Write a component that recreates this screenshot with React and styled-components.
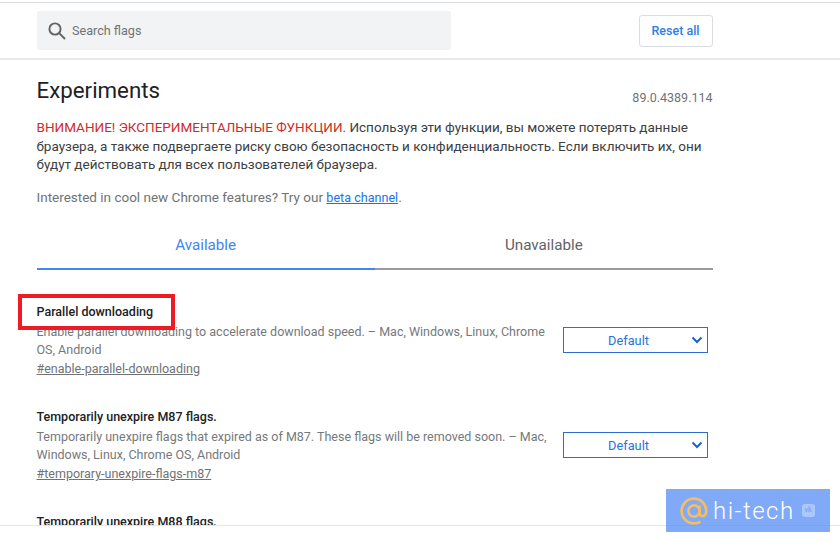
import React from 'react';
import styled, { createGlobalStyle } from 'styled-components';

const GlobalStyle = createGlobalStyle`
  html, body {
    margin: 0;
    padding: 0;
    background: #fff;
  }
  body {
    font-family: Roboto, 'Liberation Sans', sans-serif;
    color: #5f6368;
  }
`;

const flags = [
  {
    title: 'Parallel downloading',
    desc: 'Enable parallel downloading to accelerate download speed. – Mac, Windows, Linux, Chrome OS, Android',
    link: '#enable-parallel-downloading',
    marked: true,
  },
  {
    title: 'Temporarily unexpire M87 flags.',
    desc: 'Temporarily unexpire flags that expired as of M87. These flags will be removed soon. – Mac, Windows, Linux, Chrome OS, Android',
    link: '#temporary-unexpire-flags-m87',
  },
  {
    // only the title of this one is visible above the fold
    title: 'Temporarily unexpire M88 flags.',
  },
];

const App = () => {
  return (
    <Page>
      <GlobalStyle />
      <Viewport>
        <Header>
          <SearchBox>
            <svg width='20' height='20' viewBox='0 0 20 20' fill='none' stroke='#5f6368' strokeWidth='1.9'>
              <circle cx='8' cy='8' r='5.6' />
              <path d='M12.2 12.2L18 18' />
            </svg>
            <span>Search flags</span>
          </SearchBox>
          <ResetButton>Reset all</ResetButton>
        </Header>
        <Main>
          <TitleRow>
            <h1>Experiments</h1>
            <span>89.0.4389.114</span>
          </TitleRow>
          <Warning>
            <strong>ВНИМАНИЕ! ЭКСПЕРИМЕНТАЛЬНЫЕ ФУНКЦИИ.</strong> Используя эти функции, вы можете потерять данные
            браузера, а также подвергаете риску свою безопасность и конфиденциальность. Если включить их, они
            будут действовать для всех пользователей браузера.
          </Warning>
          <Promo>
            Interested in cool new Chrome features? Try our <a href='#beta'>beta channel</a>.
          </Promo>
          <Tabs>
            <Tab $active>Available</Tab>
            <Tab>Unavailable</Tab>
          </Tabs>
          <FlagList>
            {flags.map((flag) => (
              <Flag key={flag.title}>
                <div>
                  <FlagTitle>
                    {flag.title}
                    {flag.marked && <Marker />}
                  </FlagTitle>
                  {flag.desc && <FlagDesc>{flag.desc}</FlagDesc>}
                  {flag.link && <FlagLink href={flag.link}>{flag.link}</FlagLink>}
                </div>
                {flag.desc && (
                  <Select>
                    <span>Default</span>
                    <svg width='12' height='8' viewBox='0 0 12 8' fill='none' stroke='#1a63c9' strokeWidth='2'>
                      <path d='M1.5 1.500L6 6l4.500-4.500' />
                    </svg>
                  </Select>
                )}
              </Flag>
            ))}
          </FlagList>
        </Main>
      </Viewport>
      <Watermark>
        <svg width='28' height='28' viewBox='0 0 28 28' fill='none' stroke='#f5bd62' strokeWidth='2.6'>
          <circle cx='14' cy='14' r='5.6' />
          <path d='M19.6 8.6v7.6c0 4.2 6.6 4.2 6.6-2.2C26.200 7.200 20.800 1.600 14 1.600 7.200 1.600 1.600 7.200 1.600 14S7.200 26.400 14 26.400c2.500 0 4.600-.6 6.400-1.800' />
        </svg>
        <span>hi-tech</span>
        <VkBadge>vk</VkBadge>
      </Watermark>
    </Page>
  );
};

const Page = styled.div`
  position: relative;
  width: 840px;
  height: 542px;
  overflow: hidden;
  background: #fff;
`;

const Viewport = styled.div`
  height: 522px;
  margin-top: 2px;
  overflow: hidden;
  border-top: 1px solid #d9dadc;
  border-bottom: 1px solid #e4e5e6;
`;

const Header = styled.header`
  display: flex;
  align-items: center;
  justify-content: space-between;
  width: 676px;
  height: 55px;
  padding: 0 127px 0 37px;
  border-bottom: 2px solid #e8e9ea;
`;

const SearchBox = styled.div`
  display: flex;
  align-items: center;
  gap: 5px;
  box-sizing: border-box;
  width: 414px;
  height: 39px;
  padding-left: 10px;
  background: #f1f3f4;
  border-radius: 2px;
  font-size: 12.6px;
  color: #6f7376;
`;

const ResetButton = styled.button`
  box-sizing: border-box;
  width: 74px;
  height: 32px;
  padding: 0 1px 0 0;
  background: #fff;
  border: 1px solid #dadce0;
  border-radius: 3px;
  font: 500 12.5px Roboto, sans-serif;
  color: #2b7de9;
`;

const Main = styled.main`
  width: 676.5px;
  padding: 0 127px 0 36.5px;
`;

const TitleRow = styled.div`
  display: flex;
  align-items: flex-end;
  justify-content: space-between;
  height: 52px;
  h1 {
    margin: 0 0 5px;
    font-size: 22.3px;
    font-weight: 400;
    line-height: 34px;
    color: #202124;
  }
  span {
    font-size: 12.5px;
    line-height: 18px;
    margin: 0 0.5px 5px 0;
    color: #6f7376;
  }
`;

const Warning = styled.p`
  margin: 6px 0 0;
  font-size: 13.5px;
  line-height: 18.5px;
  color: #3c4043;
  strong {
    font-weight: 400;
    color: #cf2b2b;
  }
`;

const Promo = styled.p`
  margin: 14px 0 0;
  font-size: 13.5px;
  line-height: 18px;
  color: #6f7376;
  a {
    font-size: 12.6px;
    color: #1a73e8;
  }
`;

const Tabs = styled.div`
  display: grid;
  grid-template-columns: 1fr 1fr;
  margin-top: 19px;
`;

const Tab = styled.div`
  height: 42px;
  line-height: 38px;
  text-align: center;
  font-size: 15.2px;
  color: ${(p) => (p.$active ? '#4285f4' : '#5f6368')};
  border-bottom: 2px solid ${(p) => (p.$active ? '#4285f4' : '#9a9b9d')};
`;

const FlagList = styled.div`
  margin-top: 33px;
`;

const Flag = styled.section`
  display: grid;
  grid-template-columns: 1fr 145px;
  column-gap: 14px;
  align-items: center;
  width: 671.5px;
  margin-bottom: 29.5px;
`;

const FlagTitle = styled.div`
  position: relative;
  font-size: 12.5px;
  font-weight: 500;
  line-height: 18px;
  color: #202124;
`;

const Marker = styled.div`
  position: absolute;
  left: -19px;
  top: -9px;
  box-sizing: border-box;
  width: 157px;
  height: 36px;
  border: 4px solid #ed1c24;
`;

const FlagDesc = styled.div`
  margin-top: 2.5px;
  font-size: 12.5px;
  line-height: 18px;
  color: #75797c;
`;

const FlagLink = styled.a`
  display: block;
  margin-top: 1px;
  font-size: 12.5px;
  line-height: 18px;
  color: #6f7376;
`;

const Select = styled.div`
  display: flex;
  align-items: center;
  box-sizing: border-box;
  height: 26px;
  padding: 0 4px 0 0;
  border: 1px solid #2a6fd0;
  font-size: 12.8px;
  color: #2b72d8;
  span {
    flex: 1;
    padding-left: 2px;
    text-align: center;
  }
`;

const Watermark = styled.div`
  position: absolute;
  left: 666px;
  top: 489px;
  display: flex;
  align-items: center;
  gap: 5px;
  box-sizing: border-box;
  width: 164px;
  height: 43px;
  padding-left: 14px;
  background: rgba(85, 140, 245, 0.75);
  font-size: 24px;
  font-weight: 300;
  letter-spacing: 1.5px;
  color: #fff;
`;

const VkBadge = styled.span`
  width: 13px;
  height: 13px;
  margin-left: 2px;
  border-radius: 3px;
  background: rgba(255, 255, 255, 0.35);
  font-size: 7px;
  font-weight: 700;
  letter-spacing: 0;
  line-height: 13px;
  text-align: center;
  color: #7ea9f7;
`;

export default App;
